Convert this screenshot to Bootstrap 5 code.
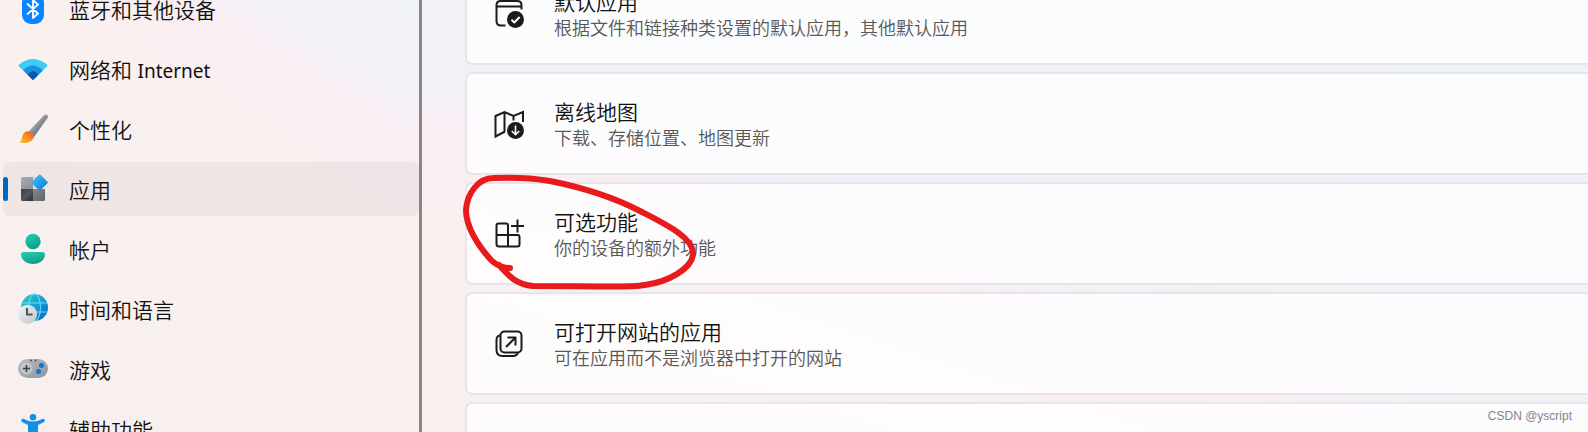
<!DOCTYPE html>
<html lang="zh-CN">
<head>
<meta charset="utf-8">
<meta name="viewport" content="width=device-width, initial-scale=1">
<title>设置 - 应用</title>
<link href="https://cdn.jsdelivr.net/npm/bootstrap@5.3.0/dist/css/bootstrap.min.css" rel="stylesheet">
<style>
  body {
    font-family: "Noto Sans", "Noto Sans CJK SC", sans-serif;
    font-weight: 350;
    color: #111;
    background: linear-gradient(198deg, #edf2fa 0%, #f0f2f7 40%, #f1f1f8 47%, #f9eef4 53%, #f9f0f0 62%, #f8f0ee 100%);
  }
  .side-pane {
    flex: 0 0 422px; border-right: 3px solid #888585; padding-left: 3px;
    background: linear-gradient(212deg, #f0f3f7 0%, #f0f2f7 10%, #f3f0f7 15%, #f9eef4 21%, #f9f0ef 34%, #f8f0ee 100%);
  }
  .side-list { gap: 6px; margin-top: -18px; }
  .side-item {
    height: 54px; gap: 21px; padding-left: 15px; flex-shrink: 0;
    border-radius: 6px; color: #111; font-size: 21px; line-height: 30px;
  }
  .side-item > span { padding-top: 2px; }
  .side-item.active { background: rgba(60, 40, 60, .05); position: relative; }
  .side-item.active::before {
    content: ""; position: absolute; left: 0; top: 15px;
    width: 5px; height: 24px; border-radius: 3px; background: #0067c0;
  }
  .side-item svg { width: 30px; height: 30px; flex-shrink: 0; overflow: visible; }
  .latin { font-size: 19px; font-weight: 400; }
  .main-pane { gap: 7px; margin-top: -38px; padding-left: 43px; margin-right: -8px; }
  .set-card {
    height: 103px; gap: 29px; padding-left: 26px; flex-shrink: 0;
    border: 2px solid #e7e5e9; border-radius: 7px; color: #111;
    background: rgba(255, 255, 255, .76); background-clip: padding-box;
  }
  .set-card svg.glyph { width: 32px; height: 32px; flex-shrink: 0; fill: none; stroke: #1b1b1b; stroke-width: 2; overflow: visible; stroke-linejoin: round; }
  .set-text { padding-top: 2px; }
  .set-title { font-size: 21px; line-height: 26px; }
  .set-desc { font-size: 18px; line-height: 26px; color: #585858; }
  .pen-ring { position: absolute; left: -7px; top: -12px; width: 240px; height: 122px; fill: none; stroke: #e71b1b; stroke-width: 6; stroke-linecap: round; stroke-linejoin: round; z-index: 2; }
  .credit { right: 16px; bottom: 7px; font: 400 12px/18px "Liberation Sans", sans-serif; color: #858588; }
</style>
</head>
<body>
<div class="d-flex vh-100 overflow-hidden position-relative">
  <nav class="side-pane overflow-hidden" aria-label="设置">
    <div class="side-list d-flex flex-column">
      <a href="#" class="side-item d-flex align-items-center text-decoration-none">
        <svg viewBox="0 0 30 30"><rect x="4" y="0" width="22" height="30" rx="9" fill="#0a84ff"/><path d="M9.500 10 20 19.500 15 24V6l5 4.500L9.500 20" fill="none" stroke="#fff" stroke-width="1.800" stroke-linejoin="round" stroke-linecap="round"/></svg>
        <span>蓝牙和其他设备</span></a>
      <a href="#" class="side-item d-flex align-items-center text-decoration-none">
        <svg viewBox="0 0 30 30"><path d="M1 12.500Q0 11.500 1.200 10.500Q15 -.500 28.800 10.500Q30 11.500 29 12.500L15 26Z" fill="#3dccf6"/><path d="M5.200 16.200Q15 7 24.800 16.200L15 26Z" fill="#1a91e0"/><path d="M9.500 20.500Q15 13.500 20.500 20.500L15.700 25.500Q15 26 14.300 25.500Z" fill="#0c59a6"/></svg>
        <span>网络和 <span class="latin">Internet</span></span></a>
      <a href="#" class="side-item d-flex align-items-center text-decoration-none">
        <svg viewBox="0 0 30 30"><defs><linearGradient id="gh" x1="0" y1="0" x2="1" y2="1"><stop offset=".3" stop-color="#a9b0b7"/><stop offset=".7" stop-color="#636c75"/></linearGradient><linearGradient id="gb" x1="0" y1="1" x2="1" y2="0"><stop stop-color="#ffc02e"/><stop offset=".55" stop-color="#fb8a22"/><stop offset="1" stop-color="#e8501b"/></linearGradient></defs><path d="M10.500 17.500 26 1.300C28-.700 31 1.500 29.500 4L16 23Z" fill="url(#gh)"/><path d="M16 22.500C15 28 9 30 1 28.500C3.500 27 3.500 25.500 4.200 22.500C5.500 17 10 16 13 18.500Q15.500 20 16 22.500Z" fill="url(#gb)"/></svg>
        <span>个性化</span></a>
      <a href="#" class="side-item active d-flex align-items-center text-decoration-none" aria-current="page">
        <svg viewBox="0 0 30 30"><defs><linearGradient id="g1" x1="0" y1="0" x2="1" y2="1"><stop stop-color="#a5abb2"/><stop offset="1" stop-color="#89919a"/></linearGradient><linearGradient id="g2" x1="0" y1="0" x2="1" y2="1"><stop stop-color="#3c4145"/><stop offset=".5" stop-color="#50565a"/><stop offset="1" stop-color="#2b2f32"/></linearGradient><linearGradient id="g3" x1="0" y1="0" x2="1" y2="1"><stop stop-color="#83898f"/><stop offset="1" stop-color="#5d6469"/></linearGradient><linearGradient id="g4" x1="0" y1="0" x2="1" y2="1"><stop stop-color="#4ac4fa"/><stop offset="1" stop-color="#0078d9"/></linearGradient></defs><path d="M3 4.500Q3 3 4.500 3H15V15H3Z" fill="url(#g1)"/><path d="M3 15H15V27H4.500Q3 27 3 25.500Z" fill="url(#g2)"/><path d="M15 15H27V25.500Q27 27 25.500 27H15Z" fill="url(#g3)"/><path d="M15 3H18V15H15Z" fill="#d8dce0"/><path d="M21 .700Q21.700 0 22.400 .700L29.500 7.800Q30 8.500 29.500 9.200L22.400 16.300Q21.700 17 21 16.300L13.900 9.200Q13.400 8.500 13.900 7.800Z" fill="url(#g4)"/></svg>
        <span>应用</span></a>
      <a href="#" class="side-item d-flex align-items-center text-decoration-none">
        <svg viewBox="0 0 30 30"><defs><linearGradient id="gp" x1="0" y1="0" x2=".5" y2="1"><stop stop-color="#25cfb4"/><stop offset="1" stop-color="#139c88"/></linearGradient></defs><circle cx="15" cy="7.500" r="7.700" fill="url(#gp)"/><path d="M5.500 18H24.500Q27 18 27 20.500C27 27 20 30 15 30S3 27 3 20.500Q3 18 5.500 18Z" fill="url(#gp)"/></svg>
        <span>帐户</span></a>
      <a href="#" class="side-item d-flex align-items-center text-decoration-none">
        <svg viewBox="0 0 30 30"><defs><linearGradient id="gg" x1="0" y1="0" x2="1" y2="1"><stop stop-color="#2fd0c6"/><stop offset=".5" stop-color="#16a0d8"/><stop offset="1" stop-color="#0b5cbd"/></linearGradient><linearGradient id="gc" x1="0" y1="0" x2="1" y2="1"><stop stop-color="#f1f2f4"/><stop offset="1" stop-color="#c4c7cb"/></linearGradient></defs><circle cx="16.500" cy="13.500" r="13.500" fill="url(#gg)"/><g fill="none" stroke="#62dff5" stroke-width="1.100"><ellipse cx="16.500" cy="13.500" rx="6" ry="13.500"/><path d="M4.500 9H28.500M4.500 18H28.500"/></g><circle cx="9.500" cy="20.300" r="9.600" fill="url(#gc)"/><path d="M9 14V20.500H14.500" fill="none" stroke="#505357" stroke-width="2"/></svg>
        <span>时间和语言</span></a>
      <a href="#" class="side-item d-flex align-items-center text-decoration-none">
        <svg viewBox="0 0 30 30"><defs><linearGradient id="gm" x1="0" y1="0" x2="1" y2="1"><stop stop-color="#bbc0c5"/><stop offset="1" stop-color="#8d949b"/></linearGradient></defs><rect y="5" width="30" height="19" rx="9.500" fill="url(#gm)"/><circle cx="8.500" cy="14.500" r="6" fill="#d0d3d6" opacity=".6"/><path d="M8.500 11V18M5 14.500H12" stroke="#3b3e41" stroke-width="1.500"/><circle cx="23.500" cy="11.500" r="2.500" fill="#0d75d2"/><circle cx="20.500" cy="17.500" r="2.500" fill="#0d75d2"/><circle cx="13" cy="6.500" r=".9" fill="#404346"/><circle cx="17.500" cy="6.500" r=".9" fill="#404346"/></svg>
        <span>游戏</span></a>
      <a href="#" class="side-item d-flex align-items-center text-decoration-none">
        <svg viewBox="0 0 30 30"><g fill="#1291e4"><circle cx="15" cy="3.200" r="3.300"/><path d="M3.500 5.300Q4.500 4.300 6 5Q15 10 24 5Q25.800 4.200 26.700 5.600Q27.300 7.300 25.500 8.200L20 11V28H10V11L4.500 8.200Q2.700 7 3.500 5.300Z"/></g></svg>
        <span>辅助功能</span></a>
    </div>
  </nav>

  <main class="main-pane d-flex flex-column flex-grow-1">
    <a href="#" class="set-card d-flex align-items-center text-decoration-none">
      <svg class="glyph" viewBox="0 0 32 32"><path d="M12.500 27.500H8Q3.500 27.500 3.500 23V7Q3.500 3 8 3H24Q28.500 3 28.500 7V11.500M3.500 8.500H28.500" /><circle cx="22.500" cy="21.500" r="8.500" fill="#1b1b1b" stroke="none"/><path d="M18.500 21.700 21.300 24.500 26.600 19" stroke="#fff"/></svg>
      <div class="set-text"><div class="set-title">默认应用</div><div class="set-desc">根据文件和链接种类设置的默认应用，其他默认应用</div></div>
    </a>
    <a href="#" class="set-card d-flex align-items-center text-decoration-none">
      <svg class="glyph" viewBox="0 0 32 32"><path d="M12 23.500 2.500 28.500V8L11.500 4 20.500 8 30 4V14M11.500 4V23.500M20.500 8V12.500" stroke-linejoin="miter"/><circle cx="22.500" cy="22.500" r="8.500" fill="#1b1b1b" stroke="none"/><path d="M22.500 17.500V26.500M18.800 23 22.500 26.700 26.200 23" stroke="#fff" stroke-width="1.600"/></svg>
      <div class="set-text"><div class="set-title">离线地图</div><div class="set-desc">下载、存储位置、地图更新</div></div>
    </a>
    <a href="#" class="set-card position-relative d-flex align-items-center text-decoration-none">
      <svg class="glyph" viewBox="0 0 32 32"><path d="M15 17V7.500Q15 5.500 13 5.500H5.500Q3.500 5.500 3.500 7.500V26Q3.500 28.500 6 28.500H24.500Q26.500 28.500 26.500 26.500V19Q26.500 17 24.500 17H3.500M15 17V28.500M24.500 1.500V14.500M18 8H31"/></svg>
      <div class="set-text"><div class="set-title">可选功能</div><div class="set-desc">你的设备的额外功能</div></div>
      <svg class="pen-ring" viewBox="460 172 240 122" aria-hidden="true"><path d="M510 268C503 268 498 266 492 261C477 245 466 226 466 210C467 193 479 178 493 178C515 177 533 178 550 181C585 188 613 197 640 211C665 224 695 238 693 255C691 269 668 282 645 285C628 288 610 286 533 286C515 284 508 275 499 265"/></svg>
    </a>
    <a href="#" class="set-card d-flex align-items-center text-decoration-none">
      <svg class="glyph" viewBox="0 0 32 32"><rect x="7.500" y="3.500" width="21" height="21" rx="4"/><path d="M7 7.500Q3.500 8 3.500 12V22Q3.500 28 9.500 28H20Q24 28 25 24.500M13 19 22.500 9.500M14.500 9.500H22.500V17.500"/></svg>
      <div class="set-text"><div class="set-title">可打开网站的应用</div><div class="set-desc">可在应用而不是浏览器中打开的网站</div></div>
    </a>
    <div class="set-card"></div>
  </main>
  <div class="credit position-absolute">CSDN @yscript</div>
</div>
<script src="https://cdn.jsdelivr.net/npm/bootstrap@5.3.0/dist/js/bootstrap.bundle.min.js"></script>
</body>
</html>
